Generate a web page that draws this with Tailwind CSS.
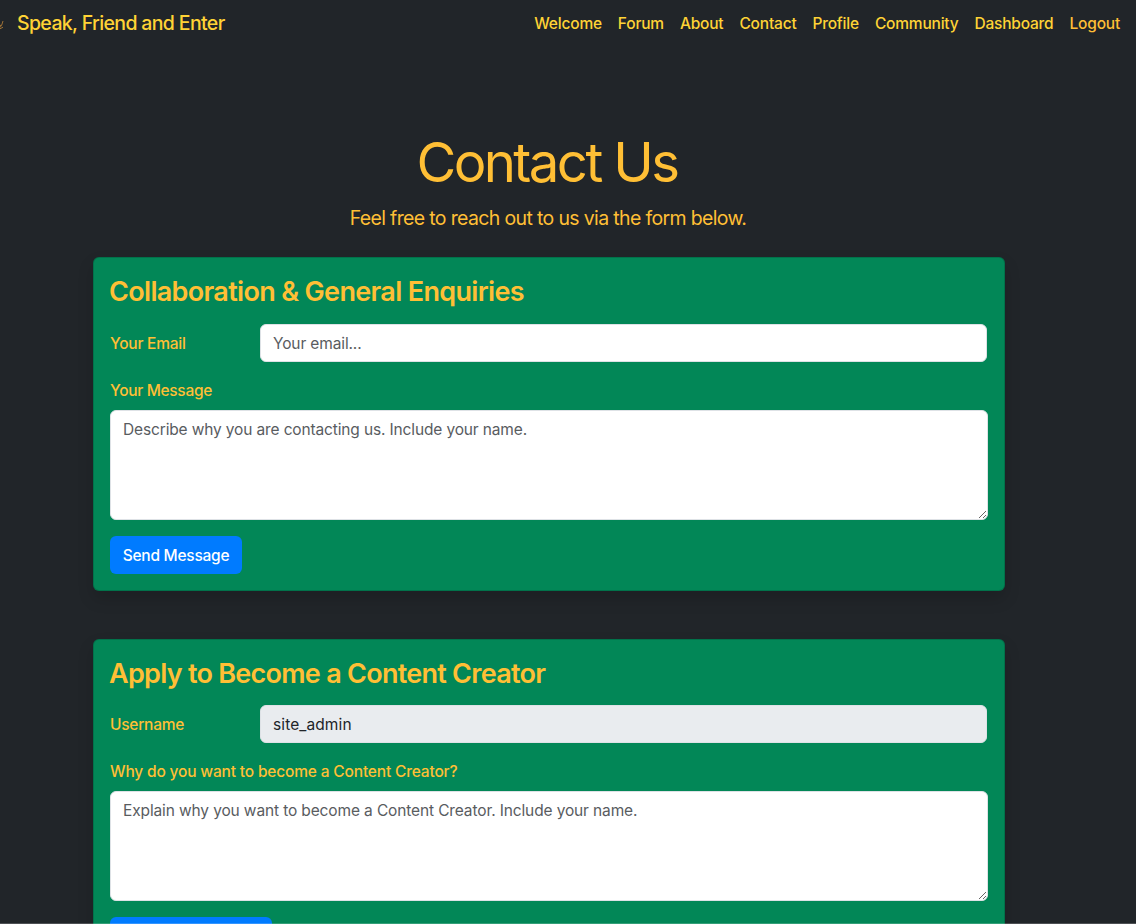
<!DOCTYPE html>
<html lang="en">
<head>
<meta charset="utf-8">
<title>Contact Us</title>
<script src="https://cdn.jsdelivr.net/npm/@tailwindcss/browser@4"></script>
</head>
<body class="relative h-[924px] overflow-hidden bg-[#212529] font-['Inter',sans-serif] text-[15.5px] leading-6 text-[#ffbf35]">
<nav class="flex h-[46px] items-center justify-between pr-4 text-[#ffd335]">
  <a class="flex items-center text-[19.5px] tracking-[-0.64px] font-[450]">
    <svg class="h-5 w-[17px] shrink-0" viewBox="0 0 17 20" fill="none" stroke="#a87838" stroke-width="0.9"><path d="M0 13.2L1.2 11.5M3 8L1.8 11.8L0 14.5M0 15.8L3 14.2"/></svg>
    <span>Speak, Friend and Enter</span>
  </a>
  <div class="flex gap-4 pt-0.5 font-[450] tracking-[-0.2px]">
    <a>Welcome</a><a>Forum</a><a>About</a><a>Contact</a><a>Profile</a><a>Community</a><a>Dashboard</a><a class="text-[#ffbf35]">Logout</a>
  </div>
</nav>
<main class="ml-[93px] w-[912px]">
  <header class="pt-[83px] text-center">
    <h1 class="pr-1 text-[54.5px] leading-[67px] font-normal tracking-[-2.6px]">Contact Us</h1>
    <p class="mt-[7px] pr-0.5 text-[19.5px] leading-[30px] tracking-[-0.65px]">Feel free to reach out to us via the form below.</p>
  </header>
  <section class="mt-6 h-[334px] rounded-md border border-black/15 bg-[#028757] p-4 shadow-[0_8px_16px_rgba(0,0,0,0.15)]">
    <h2 class="-ml-px text-[27px] leading-[36px] font-semibold tracking-[-0.67px] whitespace-nowrap">Collaboration &amp; General Enquiries</h2>
    <div class="mt-3.5 flex items-center">
      <label class="w-[150px] pt-0.5 font-medium tracking-[-0.23px]">Your Email</label>
      <input class="h-[38px] w-[727px] rounded-md border border-[#dee2e6] bg-white px-3 tracking-[-0.13px] text-[#212529] placeholder:text-[#595c5f]" placeholder="Your email...">
    </div>
    <label class="mt-[17px] block leading-6 font-medium tracking-[-0.31px]">Your Message</label>
    <textarea class="mt-[7px] block h-[110px] w-full resize-y rounded-md border border-[#dee2e6] bg-white px-3 pt-[7px] pb-1.5 tracking-[-0.14px] placeholder:text-[#595c5f]" placeholder="Describe why you are contacting us. Include your name."></textarea>
    <button class="mt-4 h-[38px] w-[132px] rounded-md bg-[#007bff] pt-0.5 font-[450] tracking-[-0.26px] whitespace-nowrap text-white">Send Message</button>
  </section>
  <section class="mt-12 h-[334px] rounded-md border border-black/15 bg-[#028757] p-4 shadow-[0_8px_16px_rgba(0,0,0,0.15)]">
    <h2 class="-ml-px text-[27px] leading-[36px] font-semibold tracking-[-0.73px] whitespace-nowrap">Apply to Become a Content Creator</h2>
    <div class="mt-[13px] flex items-center">
      <label class="w-[150px] pt-0.5 font-medium tracking-[-0.26px]">Username</label>
      <input class="h-[38px] w-[727px] rounded-md border border-[#dee2e6] bg-[#e9ecef] px-3 tracking-[0.1px] text-[#212529]" value="site_admin" readonly>
    </div>
    <label class="mt-[17px] block leading-6 font-medium tracking-[-0.17px]">Why do you want to become a Content Creator?</label>
    <textarea class="mt-[7px] block h-[110px] w-full resize-y rounded-md border border-[#dee2e6] bg-white px-3 pt-[7px] pb-1.5 tracking-[-0.13px] placeholder:text-[#595c5f]" placeholder="Explain why you want to become a Content Creator. Include your name."></textarea>
    <button class="mt-4 h-[38px] w-[162px] rounded-md bg-[#007bff]" aria-label="Submit Application"></button>
  </section>
</main>
<div class="absolute inset-x-0 bottom-0 h-px bg-white/20"></div>
</body>
</html>
